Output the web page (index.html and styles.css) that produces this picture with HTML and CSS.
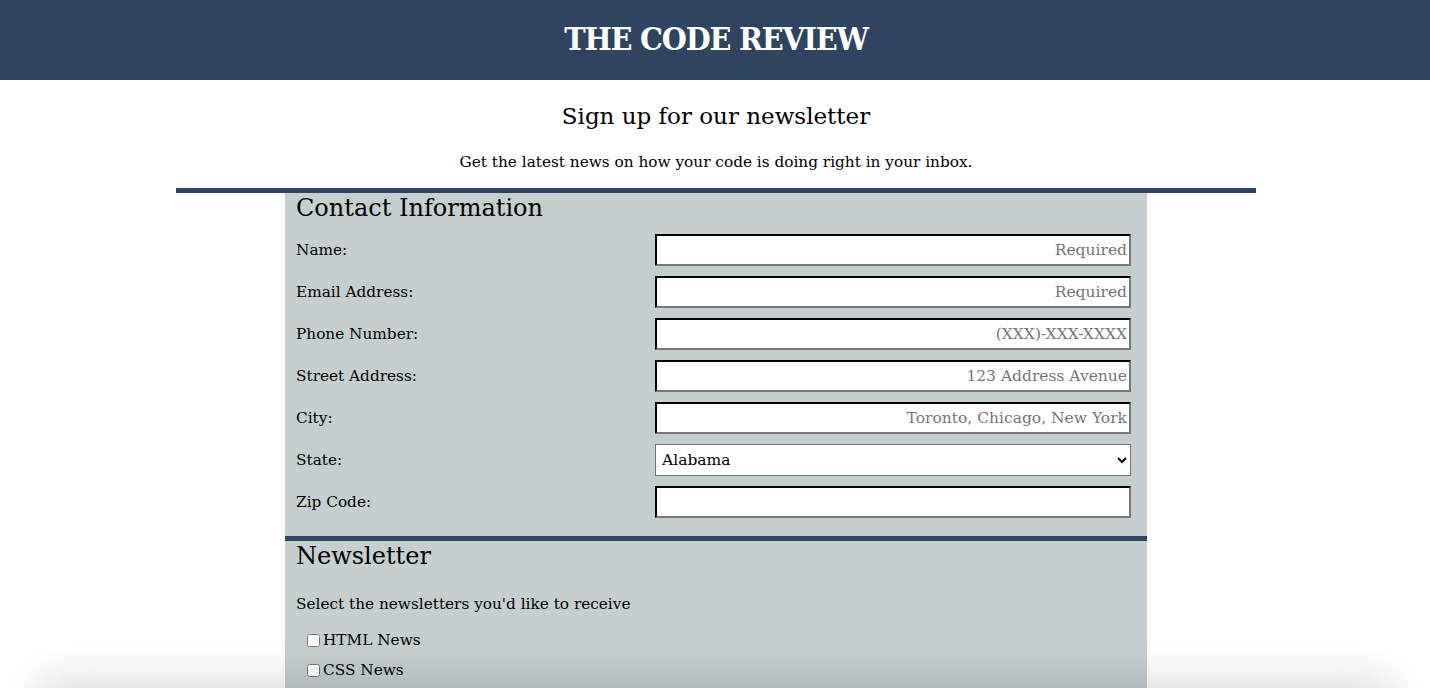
FILE: index.html
```html
<!DOCTYPE html>
<html lang="en">
<head>
<meta charset="utf-8">
<title>The Code Review</title>
<link rel="stylesheet" href="styles.css">
</head>
<body>
<header class="site-header">
  <h1 class="site-title">THE CODE REVIEW</h1>
</header>
<main class="page">
  <section class="intro">
    <h2 class="intro-title">Sign up for our newsletter</h2>
    <p class="intro-text">Get the latest news on how your code is doing right in your inbox.</p>
  </section>
  <form class="signup">
    <fieldset class="group contact">
      <h3 class="group-title">Contact Information</h3>
      <div class="fields">
        <label class="field-label" for="name">Name:</label>
        <input class="field-input" id="name" type="text" placeholder="Required">
        <label class="field-label" for="email">Email Address:</label>
        <input class="field-input" id="email" type="email" placeholder="Required">
        <label class="field-label" for="phone">Phone Number:</label>
        <input class="field-input" id="phone" type="tel" placeholder="(XXX)-XXX-XXXX">
        <label class="field-label" for="street">Street Address:</label>
        <input class="field-input" id="street" type="text" placeholder="123 Address Avenue">
        <label class="field-label" for="city">City:</label>
        <input class="field-input" id="city" type="text" placeholder="Toronto, Chicago, New York">
        <label class="field-label" for="state">State:</label>
        <select class="field-select" id="state">
          <option>Alabama</option>
          <option>Alaska</option>
          <option>Arizona</option>
        </select>
        <label class="field-label" for="zip">Zip Code:</label>
        <input class="field-input" id="zip" type="text">
      </div>
    </fieldset>
    <fieldset class="group newsletter">
      <h3 class="group-title">Newsletter</h3>
      <p class="group-text">Select the newsletters you'd like to receive</p>
      <div class="checks">
        <label class="check"><input type="checkbox" class="check-box">HTML News</label>
        <label class="check"><input type="checkbox" class="check-box">CSS News</label>
      </div>
    </fieldset>
  </form>
</main>
<div class="window-shadow"></div>
</body>
</html>
```

FILE: styles.css
```css
html, body {
  margin: 0;
  padding: 0;
}
body {
  font-family: "DejaVu Serif", "Liberation Serif", serif;
  font-size: 15.3px;
  color: #000;
  background: #fff;
  overflow: hidden;
}
.site-header {
  background: #2f445e;
  height: 80px;
  display: flex;
  align-items: center;
  justify-content: center;
  padding-left: 2px;
}
.site-title {
  margin: 0;
  color: #fff;
  font-family: "DejaVu Serif Condensed", "DejaVu Serif", serif;
  font-size: 32px;
  font-weight: bold;
  letter-spacing: -1.2px;
  line-height: 1;
  padding-bottom: 2px;
}
.page {
  padding-left: 2px;
}
.intro {
  width: 1080px;
  margin: 0 auto;
  border-bottom: 5px solid #2f445e;
  text-align: center;
  padding-top: 21px;
  padding-bottom: 16px;
}
.intro-title {
  margin: 0;
  font-size: 23px;
  font-weight: normal;
  line-height: 30px;
}
.intro-text {
  margin: 21px 0 0;
  font-size: 15.3px;
  line-height: 20px;
}
.signup {
  width: 862px;
  margin: 0 auto;
  background: #c5cfcf;
}
.group {
  margin: 0;
  border: 0;
  padding: 0 16px 18px 11px;
  min-width: 0;
}
.group-title {
  margin: 0;
  font-size: 24px;
  font-weight: normal;
  line-height: 30px;
}
.fields {
  display: grid;
  grid-template-columns: 359px 476px;
  grid-auto-rows: 32px;
  row-gap: 10px;
  align-items: center;
  margin-top: 11px;
}
.field-label {
  font-size: 15.3px;
}
.field-input {
  box-sizing: border-box;
  height: 32px;
  width: 100%;
  margin: 0;
  font-family: inherit;
  font-size: 15.5px;
  text-align: right;
  padding: 0 2px;
  border: 2px inset #767676;
  border-top-color: #222;
  border-left-color: #222;
  border-right-color: #777;
  border-bottom-color: #777;
  background: #fff;
}
.field-input::placeholder {
  color: #757575;
}
.field-select {
  box-sizing: border-box;
  height: 32px;
  width: 100%;
  margin: 0;
  font-family: inherit;
  font-size: 15.5px;
  border: 1px solid #767676;
  border-radius: 0;
  background: #fff;
  padding: 0 2px;
}
.newsletter {
  border-top: 5px solid #2f445e;
  padding-top: 0;
}
.group-text {
  margin: 23px 0 0;
  line-height: 20px;
}
.checks {
  display: flex;
  flex-direction: column;
  gap: 10px;
  margin-top: 16px;
  padding-left: 7px;
}
.check {
  display: flex;
  align-items: center;
  line-height: 20px;
}
.check-box {
  margin: 0 3px 0 4px;
  width: 13px;
  height: 13px;
}
.window-shadow {
  position: fixed;
  left: 40px;
  right: 40px;
  top: 100%;
  height: 100px;
  box-shadow: 0 -6px 45px rgba(0, 0, 0, 0.16);
  pointer-events: none;
}
```
